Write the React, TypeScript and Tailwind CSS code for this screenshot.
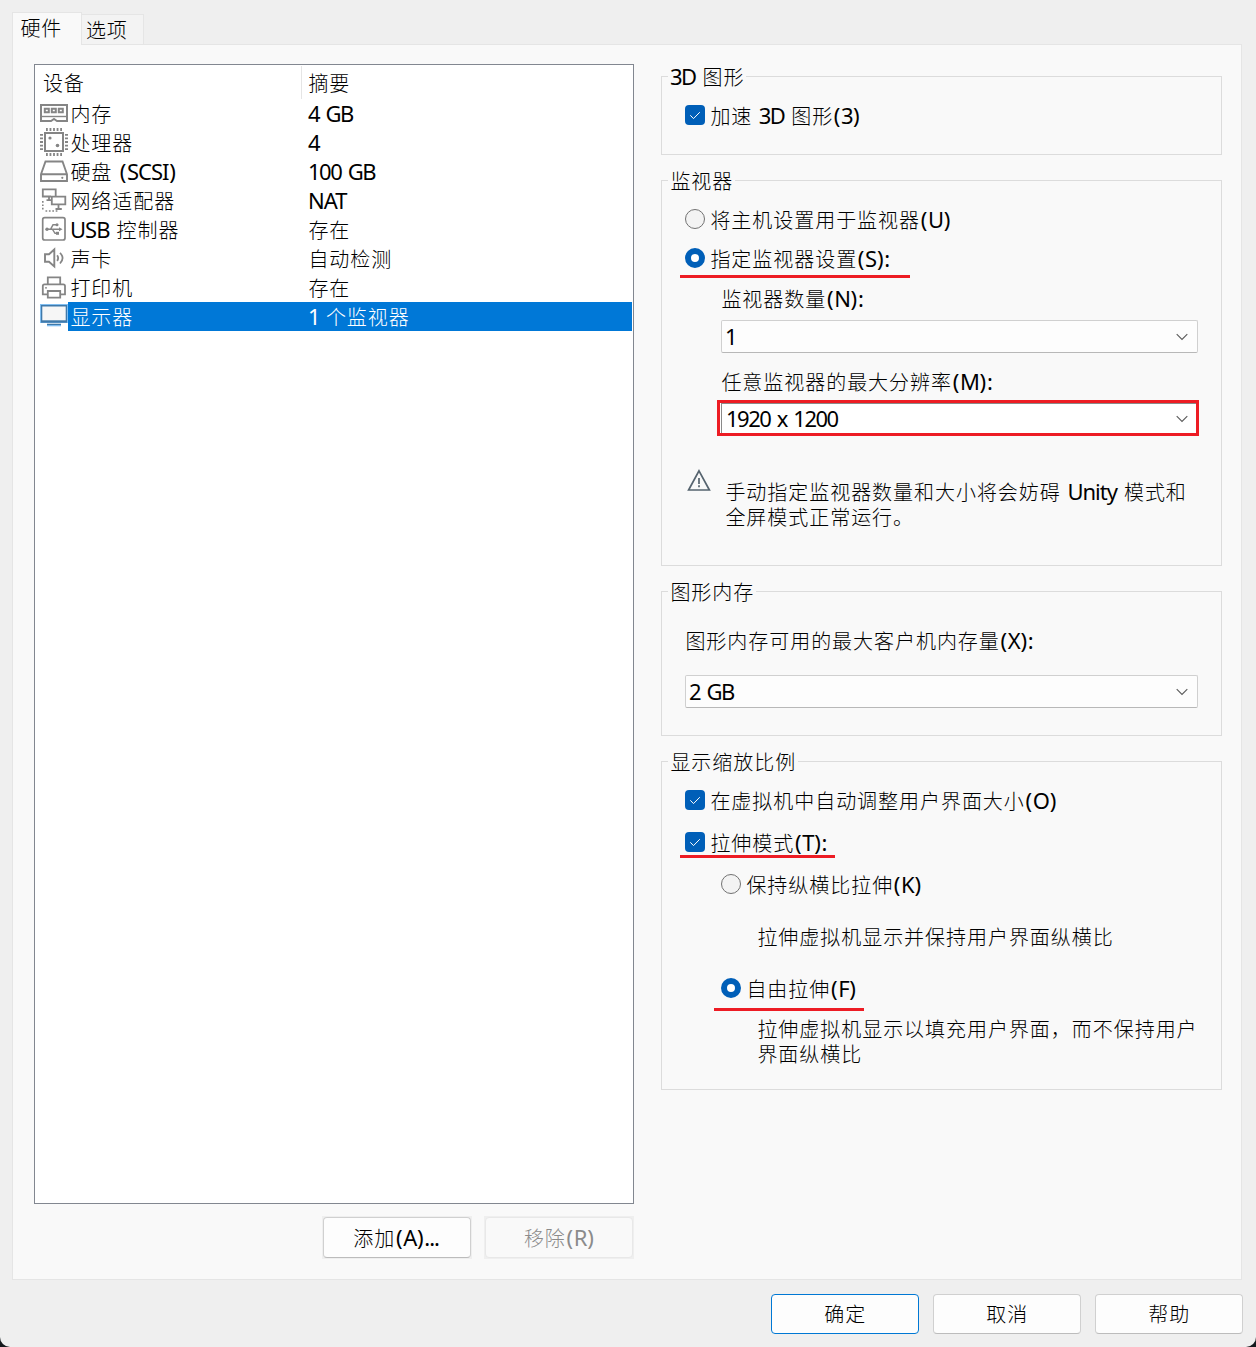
import React from 'react';

const CJK = /([\u2e80-\u9fff\u3000-\u303f\uff00-\uffef]+|[()]+)/;

// Han characters, Latin text and digits have their own size and tracking
const Txt: React.FC<{ children: string }> = ({ children }) => (
  <>
    {children.split(CJK).filter(Boolean).map((part, i) => {
      if (/^[()]/.test(part)) return <span key={i} className="px-[0.7px] leading-none">{part}</span>;
      if (CJK.test(part)) return <span key={i} className="pl-[0.4px] text-[20px] leading-none font-light tracking-[0.96px]">{part}</span>;
      if (/\d/.test(part)) return <span key={i} className="leading-none tracking-[-1.5px] [word-spacing:2.2px]">{part}</span>;
      return <span key={i} className="leading-none tracking-[-1px] [word-spacing:1.9px]">{part}</span>;
    })}
  </>
);

const MemoryIcon = () => (
  <svg width="28" height="29" viewBox="0 0 28 29" fill="none" stroke="#858585" strokeWidth="2">
    <path d="M1 6H27V22H17L14 20L11 22H1Z" />
    <path d="M1 17.5H27" strokeWidth="1.4" />
    <path d="M4.8 9.8H8.8V13.2H4.8ZM11.8 9.8H15.8V13.2H11.8ZM18.8 9.8H22.8V13.2H18.8Z" strokeWidth="2" />
  </svg>
);

const CpuIcon = () => (
  <svg width="28" height="29" viewBox="0 0 28 29" fill="none" stroke="#858585">
    <rect x="5" y="5" width="18" height="18" strokeWidth="2" />
    <path d="M6 1.5H22M6 26.5H22M1.5 6V22M26.5 6V22" strokeWidth="3" strokeDasharray="1.8 1.75" />
    <circle cx="10" cy="10" r="1.6" fill="#858585" stroke="none" />
    <circle cx="17.5" cy="17.5" r="1.8" fill="#858585" stroke="none" />
  </svg>
);

const DiskIcon = () => (
  <svg width="28" height="29" viewBox="0 0 28 29" fill="none" stroke="#858585" strokeWidth="1.9">
    <path d="M1 17.3L5.5 4.5H22.5L27 17.3V24H1ZM1 17.3H27" />
    <circle cx="22.3" cy="20.8" r="1.1" fill="#858585" stroke="none" />
  </svg>
);

const NetworkIcon = () => (
  <svg width="28" height="29" viewBox="0 0 28 29" fill="none" stroke="#858585" strokeWidth="1.8">
    <path d="M11 10.5H2.8V3.3H15.7V10M9 10.5V14M6.5 14.2H11" />
    <path d="M11.8 10.7H25.3V18.3H11.8ZM18.5 18.3V22.7M15.5 23H21.8" />
    <path d="M2.8 15V24.5M5.5 25H17.5" strokeDasharray="1.7 1.7" strokeWidth="1.6" />
  </svg>
);

const UsbIcon = () => (
  <svg width="28" height="29" viewBox="0 0 28 29" fill="none" stroke="#858585" strokeWidth="1.4">
    <rect x="2.7" y="2.7" width="22.3" height="22.3" rx="2" strokeWidth="1.7" />
    <path d="M7 14.3H20M10.5 14.3L13 9.8H16.5M12.5 14.3L15 18.3H17" />
    <path d="M22.5 14.3L19 12.3V16.3Z" fill="#858585" stroke="none" />
    <circle cx="7" cy="14.3" r="1.7" fill="#858585" stroke="none" />
    <circle cx="17" cy="9.8" r="1.5" fill="#858585" stroke="none" />
    <path d="M16 16.8H19V19.8H16Z" fill="#858585" stroke="none" />
  </svg>
);

const SoundIcon = () => (
  <svg width="28" height="29" viewBox="0 0 28 29" fill="none" stroke="#858585" strokeWidth="1.9">
    <path d="M5 10.3H9L14.3 5.5V22.5L9 17.8H5Z" />
    <path d="M17.2 11.2Q19.2 14 17.2 17" strokeWidth="1.7" />
    <path d="M20 8.8Q25.2 14 20 19.5" strokeWidth="1.7" />
  </svg>
);

const PrinterIcon = () => (
  <svg width="28" height="29" viewBox="0 0 28 29" fill="none" stroke="#858585" strokeWidth="1.8">
    <path d="M7.8 11V4.3H20.2V11" />
    <path d="M7.5 21.3H2.8V13Q2.8 11.3 4.5 11.3H23.3Q25 11.3 25 13V21.3H20.5" />
    <path d="M7.8 18H20.2V24.7H7.8Z" />
    <path d="M5 14.8H7" strokeWidth="1.2" />
  </svg>
);

const DisplayIcon = () => (
  <svg width="28" height="29" viewBox="0 0 28 29" fill="none">
    <path d="M0 2H28V21H0Z" fill="#7fbdf0" />
    <path d="M1 3H27V20.7H1Z" fill="#3f79aa" />
    <path d="M2.3 4.5H25.7V18.3H2.3Z" fill="#f6f6f6" />
    <path d="M7 21.7H21V23H7Z" fill="#3f79aa" />
    <path d="M7 23H21V24.3H7Z" fill="#7fbdf0" />
  </svg>
);

const devices = [
  { name: '内存', summary: '4 GB', icon: <MemoryIcon /> },
  { name: '处理器', summary: '4', icon: <CpuIcon /> },
  { name: '硬盘 (SCSI)', summary: '100 GB', icon: <DiskIcon /> },
  { name: '网络适配器', summary: 'NAT', icon: <NetworkIcon /> },
  { name: 'USB 控制器', summary: '存在', icon: <UsbIcon /> },
  { name: '声卡', summary: '自动检测', icon: <SoundIcon /> },
  { name: '打印机', summary: '存在', icon: <PrinterIcon /> },
  { name: '显示器', summary: '1 个监视器', icon: <DisplayIcon />, selected: true },
];

const Group: React.FC<{ title: string; className: string; children: React.ReactNode }> = ({ title, className, children }) => (
  <section className={`flex flex-col border border-[#dcdcdc] ${className}`}>
    <h2 className="-mt-3 ml-1.5 h-6 self-start bg-[#f9f9f9] pl-[2px] pr-[2px] leading-[22px]"><Txt>{title}</Txt></h2>
    {children}
  </section>
);

interface OptionProps {
  label: string;
  className?: string;
  checked?: boolean;
  children?: React.ReactNode;
}

const Check: React.FC<OptionProps> = ({ label, className = '', children }) => (
  <label className={`relative flex h-[22px] items-start gap-[5px] ${className}`}>
    <span className="size-5 shrink-0 rounded-[4px] bg-[#005fb8]">
      <svg width="20" height="20" viewBox="0 0 20 20" fill="none" stroke="#ffffff" strokeWidth="1">
        <path d="M5.3 10.3L8.5 13.6L14.8 7.2" />
      </svg>
    </span>
    <span className="-mt-px leading-[18px]"><Txt>{label}</Txt></span>
    {children}
  </label>
);

const Radio: React.FC<OptionProps> = ({ label, className = '', checked, children }) => (
  <label className={`relative flex h-[22px] items-start gap-[5px] ${className}`}>
    {checked ? (
      <span className="size-5 shrink-0 rounded-full border-[6px] border-[#005fb8] bg-white" />
    ) : (
      <span className="size-5 shrink-0 rounded-full border border-[#727272] bg-[#f3f3f3]" />
    )}
    <span className="-mt-px leading-[18px]"><Txt>{label}</Txt></span>
    {children}
  </label>
);

const Select: React.FC<{ value: string; className: string }> = ({ value, className }) => (
  <button className={`flex items-center justify-between text-left ${className}`}>
    <span className="pb-0.5 leading-none"><Txt>{value}</Txt></span>
    <svg width="12" height="8" viewBox="0 0 12 8" fill="none" stroke="#5a5a5a" strokeWidth="1.1">
      <path d="M0.7 1.2L6 6.5L11.3 1.2" />
    </svg>
  </button>
);

export default function App() {
  return (
    <div className="h-[1347px] w-[1256px] overflow-hidden bg-[#15191d]">
      <div className="flex h-full flex-col rounded-b-[10px] bg-[#efefef] pl-3 pt-3 font-['Noto_Sans','Noto_Sans_CJK_SC',sans-serif] text-[22px] text-black whitespace-nowrap">
        <nav className="flex h-8 items-end">
          <button className="z-10 -mb-px h-[33px] w-[70px] border border-b-0 border-[#e5e5e5] bg-[#f9f9f9] pb-[3px] pl-[7px] text-left leading-[29px]"><Txt>硬件</Txt></button>
          <button className="-ml-px h-[30px] w-[63px] border border-b-0 border-[#e5e5e5] bg-[#f3f3f3] pb-px pl-[3.5px] text-left leading-[28px]"><Txt>选项</Txt></button>
        </nav>

        <main className="flex h-[1236px] w-[1230px] border border-[#e5e5e5] bg-[#f9f9f9] pl-[21px]">
          <div className="mt-[19px] w-[600px]">
            <div className="h-[1140px] border border-[#828790] bg-white">
              <div className="flex h-[34px] leading-[34px]">
                <div className="w-[266px] pl-[7.5px]"><Txt>设备</Txt></div>
                <div className="mt-px h-[33px] border-l border-[#e5e5e5] pl-[6px] leading-8"><Txt>摘要</Txt></div>
              </div>
              {devices.map((d) => (
                <div key={d.name} className="flex h-[29px] pl-[5px] pr-px leading-[28px]">
                  {d.icon}
                  <div className={`flex flex-1 pl-[2px] ${d.selected ? 'bg-[#0078d7] text-white' : ''}`}>
                    <div className="w-[238px]"><Txt>{d.name}</Txt></div>
                    <div><Txt>{d.summary}</Txt></div>
                  </div>
                </div>
              ))}
            </div>
            <div className="mt-3 flex justify-end gap-3">
              <div className="h-[43px] w-[150px] bg-[#efefef] p-px">
                <button className="size-full rounded-[4px] border border-[#d0d0d0] border-b-[#bcbcbc] bg-[#fdfdfd] pb-px pr-0.5"><Txt>添加(A)...</Txt></button>
              </div>
              <div className="h-[43px] w-[150px] bg-[#efefef] p-px">
                <button className="size-full rounded-[4px] border border-[#e8e8e8] bg-[#f9f9f9] pb-px text-[#8b8b8b]" disabled><Txt>移除(R)</Txt></button>
              </div>
            </div>
          </div>

          <div className="ml-[27px] mt-[31px] flex w-[561px] flex-col gap-[25px]">
            <Group title="3D 图形" className="h-[79px]">
              <Check label="加速 3D 图形(3)" className="ml-[23px] mt-4" />
            </Group>

            <Group title="监视器" className="h-[386px]">
              <Radio label="将主机设置用于监视器(U)" className="ml-[23px] mt-4" />
              <Radio label="指定监视器设置(S):" className="ml-[23px] mt-[17px]" checked>
                <i className="absolute -left-[5px] top-[27px] h-[3px] w-[230px] bg-[#ed1c24]" />
              </Radio>
              <div className="ml-[59px] mt-[17px] h-[22px] leading-[18px]"><Txt>监视器数量(N):</Txt></div>
              <Select value="1" className="ml-[59px] mt-[11px] h-[33px] w-[477px] rounded-[2px] border border-[#d0d0d0] border-b-[#b8b8b8] bg-[#fdfdfd] pl-[3px] pr-[9px]" />
              <div className="ml-[59px] mt-[17px] h-[22px] leading-[18px]"><Txt>任意监视器的最大分辨率(M):</Txt></div>
              <div className="ml-[55px] mt-2 h-9 w-[482px] border-[3px] border-[#ed1c24] bg-white pl-px">
                <Select value="1920 x 1200" className="size-full border-l border-t border-[#8a8a8a] pl-1 pr-2" />
              </div>
              <div className="mt-[33px] flex pl-[25px]">
                <svg width="24" height="23" viewBox="0 0 24 23" fill="none" stroke="#56646f" strokeWidth="1.7">
                  <path d="M12 1.8L22.4 21H1.6Z" />
                  <path d="M12 9V15M12 16.3V18.2" />
                </svg>
                <p className="ml-[14px] mt-[10px] leading-[25px]">
                  <Txt>手动指定监视器数量和大小将会妨碍 Unity 模式和</Txt>
                  <br />
                  <Txt>全屏模式正常运行。</Txt>
                </p>
              </div>
            </Group>

            <Group title="图形内存" className="h-[145px]">
              <div className="ml-[23px] mt-[25px] h-[22px] leading-[18px]"><Txt>图形内存可用的最大客户机内存量(X):</Txt></div>
              <Select value="2 GB" className="ml-[23px] mt-6 h-[33px] w-[513px] rounded-[2px] border border-[#d0d0d0] border-b-[#b8b8b8] bg-[#fdfdfd] pl-[3px] pr-[9px]" />
            </Group>

            <Group title="显示缩放比例" className="h-[329px]">
              <Check label="在虚拟机中自动调整用户界面大小(O)" className="ml-[23px] mt-4" />
              <Check label="拉伸模式(T):" className="ml-[23px] mt-5">
                <i className="absolute -left-[5px] top-[23px] h-[3px] w-[155px] bg-[#ed1c24]" />
              </Check>
              <Radio label="保持纵横比拉伸(K)" className="ml-[59px] mt-5" />
              <p className="ml-[95px] mt-7 leading-[25px]"><Txt>拉伸虚拟机显示并保持用户界面纵横比</Txt></p>
              <Radio label="自由拉伸(F)" className="ml-[59px] mt-[29px]" checked>
                <i className="absolute -left-[7px] top-[30px] h-[3px] w-[150px] bg-[#ed1c24]" />
              </Radio>
              <p className="ml-[95px] mt-4 leading-[25px]">
                <Txt>拉伸虚拟机显示以填充用户界面，而不保持用户</Txt>
                <br />
                <Txt>界面纵横比</Txt>
              </p>
            </Group>
          </div>
        </main>

        <footer className="mt-[14px] flex justify-end gap-[14px] pr-[13px]">
          <button className="h-10 w-[148px] rounded-[4px] border border-[#0078d4] bg-[#fdfdfd] pb-0.5"><Txt>确定</Txt></button>
          <button className="h-10 w-[148px] rounded-[4px] border border-[#d0d0d0] border-b-[#bcbcbc] bg-[#fdfdfd] pb-0.5"><Txt>取消</Txt></button>
          <button className="h-10 w-[148px] rounded-[4px] border border-[#d0d0d0] border-b-[#bcbcbc] bg-[#fdfdfd] pb-0.5"><Txt>帮助</Txt></button>
        </footer>
      </div>
    </div>
  );
}
